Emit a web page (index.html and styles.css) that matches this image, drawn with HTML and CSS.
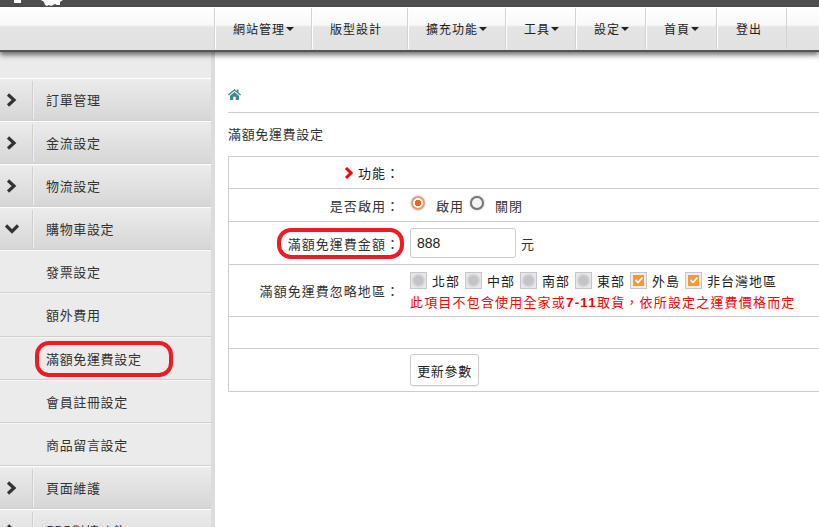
FILE: index.html
```html
<!DOCTYPE html>
<html lang="zh-Hant">
<head>
<meta charset="utf-8">
<title>滿額免運費設定</title>
<link rel="stylesheet" href="styles.css">
</head>
<body>
<div class="topbar">
  <svg class="top-icon" width="64" height="7" viewBox="0 0 64 7"><rect x="14" y="0" width="7" height="3" fill="#fff"/><path d="M41 0h22l-3 2v3l-3 0-2-1-2 1-2 1-2-1-2 1-2-1-1-3z" fill="#fff"/></svg>
</div>
<nav class="navbar">
  <a class="nav-item w97">網站管理<i class="caret"></i></a>
  <a class="nav-item w96">版型設計</a>
  <a class="nav-item w98">擴充功能<i class="caret"></i></a>
  <a class="nav-item w70">工具<i class="caret"></i></a>
  <a class="nav-item w70">設定<i class="caret"></i></a>
  <a class="nav-item w71">首頁<i class="caret"></i></a>
  <a class="nav-item w71">登出</a>
</nav>
<div class="page">
  <aside class="sidebar">
    <div class="side-head"><span class="side-arrow"><svg width="12" height="14" viewBox="0 0 12 14"><path d="M2 1.500l6 5.500-6 5.500" class="chev"/></svg></span><span class="side-label">訂單管理</span></div>
    <div class="side-head"><span class="side-arrow"><svg width="12" height="14" viewBox="0 0 12 14"><path d="M2 1.500l6 5.500-6 5.500" class="chev"/></svg></span><span class="side-label">金流設定</span></div>
    <div class="side-head"><span class="side-arrow"><svg width="12" height="14" viewBox="0 0 12 14"><path d="M2 1.500l6 5.500-6 5.500" class="chev"/></svg></span><span class="side-label">物流設定</span></div>
    <div class="side-head"><span class="side-arrow"><svg width="14" height="12" viewBox="0 0 14 12"><path d="M1 2.500l6 6 6-6" class="chev"/></svg></span><span class="side-label">購物車設定</span></div>
    <div class="side-sub">發票設定</div>
    <div class="side-sub">額外費用</div>
    <div class="side-sub"><span class="mark mark-side">滿額免運費設定</span></div>
    <div class="side-sub">會員註冊設定</div>
    <div class="side-sub">商品留言設定</div>
    <div class="side-head"><span class="side-arrow"><svg width="12" height="14" viewBox="0 0 12 14"><path d="M2 1.500l6 5.500-6 5.500" class="chev"/></svg></span><span class="side-label">頁面維護</span></div>
    <div class="side-head"><span class="side-arrow"><svg width="12" height="14" viewBox="0 0 12 14"><path d="M2 1.500l6 5.500-6 5.500" class="chev"/></svg></span><span class="side-label">ERP對接功能</span></div>
  </aside>
  <main class="main">
    <div class="crumb"><svg width="13" height="11" viewBox="0 0 13 11"><path d="M6.500 0L0 5.600l.8.9L6.500 1.700l5.700 4.800.8-.9L10.500 3.500V.6H8.800v1.400z" fill="#3f8a8c"/><path d="M2 6.700L6.500 2.900 11 6.700V11H7.700V7.800H5.300V11H2z" fill="#3f8a8c"/></svg></div>
    <h1 class="title">滿額免運費設定</h1>
    <div class="form-table">
      <div class="row r1"><div class="label"><svg class="red-chev" width="10" height="12" viewBox="0 0 10 12"><path d="M2 1l5 5-5 5" fill="none" stroke="#f00" stroke-width="3"/></svg>功能：</div><div class="value"></div></div>
      <div class="row r2"><div class="label">是否啟用：</div><div class="value radios">
        <span class="radio on"></span><span class="opt">啟用</span><span class="radio"></span><span class="opt">關閉</span>
      </div></div>
      <div class="row r3"><div class="label"><span class="mark mark-label">滿額免運費金額：</span></div><div class="value amount"><span class="input">888</span><span>元</span></div></div>
      <div class="row r4"><div class="label">滿額免運費忽略地區：</div><div class="value">
        <div class="checks">
          <span class="check"></span><span class="chk-label">北部</span>
          <span class="check"></span><span class="chk-label">中部</span>
          <span class="check"></span><span class="chk-label">南部</span>
          <span class="check"></span><span class="chk-label">東部</span>
          <span class="check on"><svg width="10" height="8" viewBox="0 0 10 8"><path d="M1.500 4l2.500 2.500L8.500 1.500" fill="none" stroke="#fff" stroke-width="1.800"/></svg></span><span class="chk-label">外島</span>
          <span class="check on"><svg width="10" height="8" viewBox="0 0 10 8"><path d="M1.500 4l2.500 2.500L8.500 1.500" fill="none" stroke="#fff" stroke-width="1.800"/></svg></span><span class="chk-label">非台灣地區</span>
        </div>
        <div class="notice">此項目不包含使用全家或<b>7-11</b>取貨，依所設定之運費價格而定</div>
      </div></div>
      <div class="row r5"><div class="label"></div><div class="value"></div></div>
      <div class="row r6"><div class="label"></div><div class="value"><span class="button">更新參數</span></div></div>
    </div>
  </main>
</div>
</body>
</html>
```
FILE: styles.css
```css
* { box-sizing: border-box; }
html, body { margin: 0; height: 100%; overflow: hidden; background: #fff; }
body { font-family: "Noto Sans CJK TC", "Liberation Sans", sans-serif; font-size: 13px; font-weight: 400; color: #333; width: 819px; height: 527px; }

.topbar { height: 7px; background: #4f4f4f; overflow: hidden; }
.top-icon { display: block; }

.navbar { height: 45px; display: flex; padding-left: 214px; padding-top: 1px; border-bottom: 2px solid #555; background: linear-gradient(#fff 0, #f8f8f8 18px, #e4e4e4 20px, #e2e2e2 100%); box-shadow: 0 3px 5px rgba(0,0,0,.55); position: relative; z-index: 2; }
.nav-item { display: flex; align-items: center; padding-left: 18px; height: 41px; color: #222; border-left: 1px solid #d2d2d2; box-shadow: inset 1px 0 0 #fff; letter-spacing: 1px; font-size: 12px; }
.nav-item:last-child { border-right: 1px solid #d2d2d2; padding-left: 19px; }
.w97 { width: 97px; } .w96 { width: 96px; } .w98 { width: 98px; } .w70 { width: 70px; } .w71 { width: 71px; }
.caret { display: inline-block; margin-left: 1px; border: 4px solid transparent; border-top: 4px solid #222; border-bottom: 0; }

.page { display: flex; height: 475px; }

.sidebar { width: 215px; flex: none; background: #ebebeb; border-right: 4px solid #dcdcdc; padding-top: 26px; color: #333; overflow: hidden; }
.side-head { height: 43px; display: flex; align-items: center; background: linear-gradient(#ececec, #d6d6d6); border-top: 1px solid #fff; border-bottom: 1px solid #d0d0d0; }
.side-arrow { width: 33px; height: 38px; display: flex; align-items: center; justify-content: center; border-right: 1px solid #d0d0d0; box-shadow: 1px 0 0 #f0f0f0; flex: none; padding-right: 10px; padding-left: 2px; }
.chev { fill: none; stroke: #333; stroke-width: 3.200; }
.side-label { margin-left: 13px; letter-spacing: .05em; }
.side-sub { height: 43.300px; display: flex; align-items: center; padding-left: 46px; border-top: 1px solid #f7f7f7; border-bottom: 1px solid #cfcfcf; letter-spacing: .05em; }

.main { flex: 1; padding: 0 0 0 13px; min-width: 0; color: #333; }
.crumb { height: 61px; padding-top: 37px; border-bottom: 1px solid #ccc; }
.crumb svg { display: block; }
.title { font-size: 13px; font-weight: 400; margin: 0; height: 43px; padding-top: 11px; letter-spacing: .05em; }
.form-table { border: 1px solid #ccc; border-right: 0; width: 600px; }
.row { display: flex; border-bottom: 1px solid #ccc; align-items: stretch; }
.row:last-child { border-bottom: 0; }
.r1 { height: 32px; } .r2 { height: 33px; } .r3 { height: 43px; } .r4 { height: 52px; } .r5 { height: 32px; } .r6 { height: 42px; }
.label { width: 171px; flex: none; display: flex; align-items: center; justify-content: flex-end; letter-spacing: .08em; color: #333; }
.r1 .label { color: #222; }
.red-chev { margin-right: 4px; }
.value { flex: 1; padding-left: 10px; display: flex; flex-direction: column; justify-content: center; min-width: 0; }

.radios { flex-direction: row; justify-content: flex-start; align-items: center; padding-left: 11px; }
.radio { width: 14px; height: 14px; border-radius: 50%; border: 2px solid #777; background: #f4f4f4; box-shadow: 0 0 2px rgba(0,0,0,.35); flex: none; margin-top: -4px; }
.radio.on { border-color: #e89a70; background: radial-gradient(circle, #e8622a 0 3px, #fff 3.500px); }
.opt { margin: 0 6px 0 11px; letter-spacing: 1px; }

.amount { flex-direction: row; justify-content: flex-start; align-items: center; gap: 5px; }
.input { width: 106px; height: 30px; border: 1px solid #ccc; border-radius: 3px; padding-left: 6px; display: flex; align-items: center; font-size: 14px; color: #222; font-family: "Liberation Sans", sans-serif; }

.checks { display: flex; align-items: center; height: 18px; margin-top: 1px; }
.check { width: 17px; height: 17px; border: 1px solid #c6c6c6; background: radial-gradient(#c4c4c8 40%, #e8e8ea 70%); margin-right: 5px; flex: none; display: flex; align-items: center; justify-content: center; }
.check.on { background: #f09a3c; box-shadow: inset 0 0 0 2px #eee; }
.check svg { display: block; }
.chk-label { margin-right: 5px; letter-spacing: 1px; color: #222; }
.notice { color: #f00; margin-top: 3px; letter-spacing: 1.180px; white-space: nowrap; font-size: 13px; }
.notice b { font-family: "Liberation Sans", sans-serif; font-size: 13.500px; }

.button { width: 69px; height: 32px; border: 1px solid #ccc; border-radius: 3px; display: flex; align-items: center; justify-content: center; color: #222; box-shadow: 0 1px 1px rgba(0,0,0,.08); letter-spacing: .05em; }

.mark { position: relative; }
.mark::after { content: ""; position: absolute; border: 4px solid #ed1c24; border-radius: 14px; }
.mark-side::after { left: -11px; right: -31px; top: -8px; bottom: -9px; }
.mark-label::after { left: -11px; right: -4px; top: -6px; bottom: -6px; }
```
